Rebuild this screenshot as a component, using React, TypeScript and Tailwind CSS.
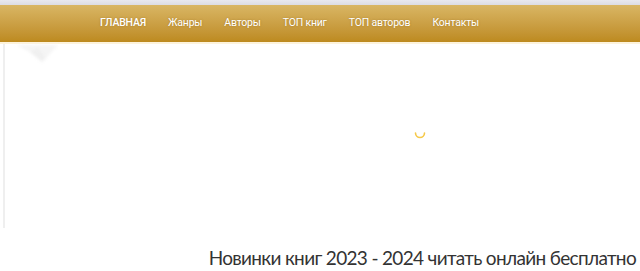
import React from 'react';

const navItems = ['ГЛАВНАЯ', 'Жанры', 'Авторы', 'ТОП книг', 'ТОП авторов', 'Контакты'];

export default function App() {
  return (
    <div className="w-[640px] h-[271px] bg-white overflow-hidden font-['Lato',sans-serif]">
      {/* top strip */}
      <div className="h-[5px] bg-gradient-to-b from-[#e9e9ee] to-[#dcdce2]" />

      {/* gold menu */}
      <nav className="h-[37px] bg-gradient-to-b from-[#d9b663] to-[#bd8a1e] flex items-center pl-[89px] font-['Roboto',sans-serif]">
        {navItems.map((item, i) => (
          <a
            key={item}
            className={`px-[11px] text-[10.5px] text-white leading-none tracking-[-0.2px] [text-shadow:0_0_2px_rgba(120,80,0,0.45)] ${
              i === 0 ? 'font-medium' : ''
            }`}
          >
            {item}
          </a>
        ))}
      </nav>
      <div className="h-[2px] bg-[#fdf3dc]" />

      <div className="flex">
        {/* left rail */}
        <div className="relative w-[5px] h-[184px] border-r-[2px] border-[#efefef]">
          <svg className="absolute left-[12px] top-0 blur-[1.5px]" width="50" height="24" viewBox="0 0 50 24">
            <path d="M4 1 L18 8 L26 3 L34 14 L46 1 Z" fill="#f5f5f5" />
            <path d="M18 8 L26 3 L34 14 L30 18 Z" fill="#f0f0f0" />
          </svg>
        </div>

        {/* loading area */}
        <div className="flex-1 relative h-[184px]">
          <svg className="absolute left-[409px] top-[84px]" width="12" height="12" viewBox="0 0 12 12">
            <path d="M1.5 5 A4.5 4.5 0 0 0 10.5 5" fill="none" stroke="#f6c94a" strokeWidth="1.6" strokeLinecap="round" />
          </svg>
        </div>
      </div>

      <h1 className="mt-[16px] pr-[4px] text-right text-[19px] leading-[28px] tracking-[-0.67px] text-[#333333]">
        Новинки книг 2023 - 2024 читать онлайн бесплатно
      </h1>
    </div>
  );
}
